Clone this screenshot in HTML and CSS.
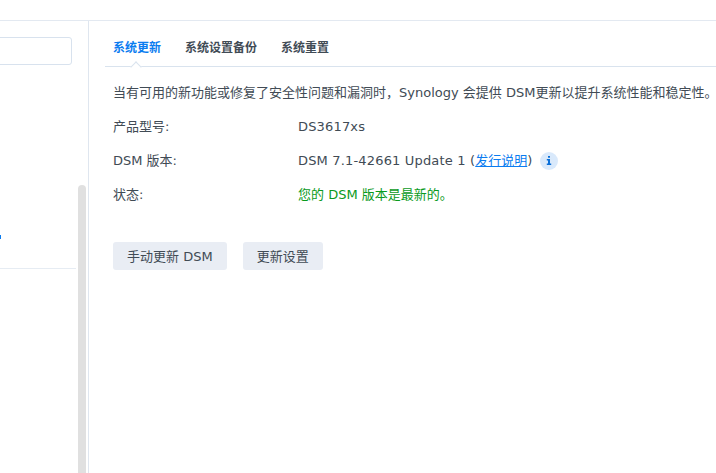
FILE: index.html
```html
<!DOCTYPE html>
<html lang="zh-CN">
<head>
    <meta charset="UTF-8">
    <title>系统更新</title>
    <link rel="stylesheet" href="styles.css">
</head>
<body>
    <div class="top-bar"></div>
    <div class="window">
        <div class="sidebar">
            <div class="search-box"></div>
            <div class="nav-mark"></div>
            <div class="nav-line"></div>
            <div class="scrollbar"></div>
        </div>
        <div class="content">
            <div class="tabs">
                <span class="tab active">系统更新</span>
                <span class="tab">系统设置备份</span>
                <span class="tab">系统重置</span>
            </div>
            <p class="intro">当有可用的新功能或修复了安全性问题和漏洞时，Synology 会提供 DSM更新以提升系统性能和稳定性。</p>
            <div class="row">
                <span class="row-label">产品型号:</span>
                <span class="value">DS3617xs</span>
            </div>
            <div class="row">
                <span class="row-label">DSM 版本:</span>
                <span class="value">DSM 7.1-42661 Update 1 (<a class="link" href="#">发行说明</a>)</span>
                <span class="info-icon">
                    <svg width="6" height="9" viewBox="0 0 6 9"><path d="M2 0h2v1.8H2zM.8 3H4v4.6h1.2V9H.8V7.6H2V4.4H.8z" fill="#0a6fd8"/></svg>
                </span>
            </div>
            <div class="row">
                <span class="row-label">状态:</span>
                <span class="status-ok">您的 DSM 版本是最新的。</span>
            </div>
            <div class="buttons">
                <button class="btn">手动更新 DSM</button>
                <button class="btn">更新设置</button>
            </div>
        </div>
    </div>
</body>
</html>
```

FILE: styles.css
```css
html, body {
    height: 100%;
}
body {
    margin: 0;
    overflow: hidden;
    background: #fff;
    color: #414b55;
    font-family: "DejaVu Sans", "Noto Sans CJK SC", sans-serif;
    font-size: 13px;
    line-height: 20px;
}
.top-bar {
    height: 20px;
    border-bottom: 1px solid #e3e9f1;
}
.window {
    display: flex;
    height: 452px;
}
.sidebar {
    position: relative;
    flex: none;
    width: 88px;
    border-right: 1px solid #dfe6ef;
}
.search-box {
    width: 79px;
    height: 26px;
    margin: 16px 0 0 -9px;
    border: 1px solid #d8e2ee;
    border-radius: 3px;
}
.nav-mark {
    width: 1px;
    height: 4px;
    margin-top: 170px;
    background: #0a7cf0;
}
.nav-line {
    width: 76px;
    height: 1px;
    margin-top: 29px;
    background: #e6ecf3;
}
.scrollbar {
    position: absolute;
    top: 164px;
    bottom: 0;
    left: 78px;
    width: 8px;
    background: #e0e0e0;
    border-radius: 4px 4px 0 0;
}
.content {
    flex: 1;
    min-width: 0;
    padding: 0 0 0 16px;
}
.tabs {
    position: relative;
    display: flex;
    gap: 24px;
    height: 46px;
    margin-right: -20px;
    padding: 17px 0 0 8px;
    box-sizing: border-box;
    border-bottom: 1px solid #d9e3ee;
    font-size: 12px;
    font-weight: 700;
}
.tab {
    color: #414b55;
}
.active {
    color: #0a7cf0;
}
.active::after {
    content: "";
    position: absolute;
    left: 27px;
    top: 42px;
    width: 7px;
    height: 7px;
    background: #fff;
    border-left: 1px solid #d9e3ee;
    border-top: 1px solid #d9e3ee;
    transform: rotate(45deg);
}
.intro {
    margin: 16px 0 14px 8px;
    white-space: nowrap;
}
.row {
    display: flex;
    align-items: center;
    height: 20px;
    margin: 0 0 14px 8px;
    white-space: nowrap;
}
.row-label {
    flex: none;
    width: 185px;
}
.value {
    letter-spacing: 0.17px;
}
.link {
    color: #0a7cf0;
    letter-spacing: 0;
}
.info-icon {
    display: flex;
    align-items: center;
    justify-content: center;
    width: 18px;
    height: 18px;
    margin: -1px 0 0 7px;
    background: #d9e9fb;
    border-radius: 50%;
}
.status-ok {
    color: #0a9a1c;
}
.buttons {
    display: flex;
    gap: 16px;
    margin: 37px 0 0 8px;
}
.btn {
    height: 28px;
    padding: 0 14px 2px;
    border: none;
    border-radius: 3px;
    background: #e9edf4;
    color: #414b55;
    font-family: inherit;
    font-size: 13px;
}
```
